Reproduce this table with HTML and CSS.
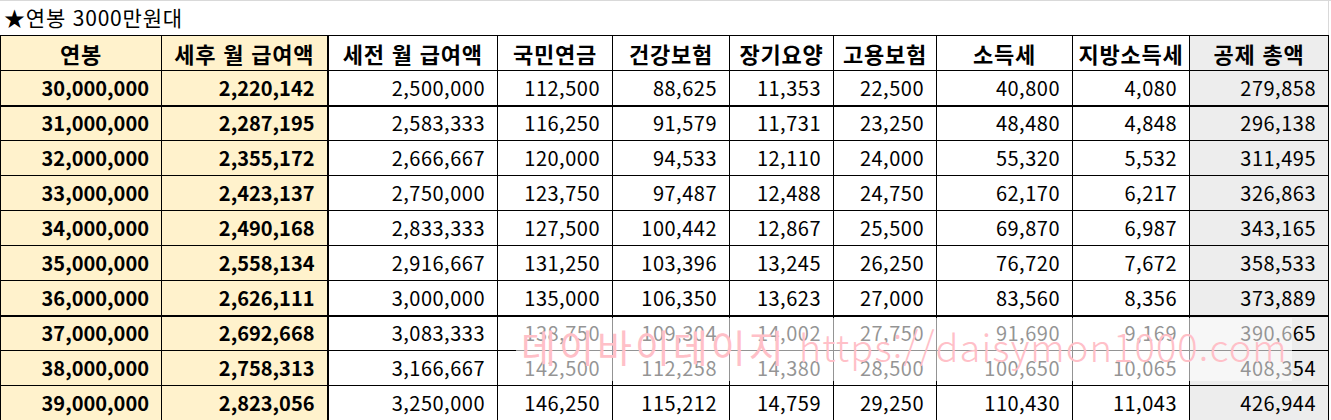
FILE: index.html
```html
<!DOCTYPE html>
<html lang="ko">
<head>
<meta charset="utf-8">
<link rel="stylesheet" href="styles.css">
</head>
<body>
<div class="sheet">
  <div class="title">★연봉 3000만원대</div>
  <div class="table-wrap">
    <table class="grid">
      <colgroup>
        <col class="c1"><col class="c2"><col class="c3"><col class="c4"><col class="c5">
        <col class="c6"><col class="c7"><col class="c8"><col class="c9"><col class="c10">
      </colgroup>
      <thead>
        <tr>
          <th class="gold">연봉</th>
          <th class="gold sep">세후 월 급여액</th>
          <th>세전 월 급여액</th>
          <th>국민연금</th>
          <th>건강보험</th>
          <th>장기요양</th>
          <th>고용보험</th>
          <th>소득세</th>
          <th>지방소득세</th>
          <th class="gray">공제 총액</th>
        </tr>
      </thead>
      <tbody>
        <tr class="thick"><td class="gold b">30,000,000</td><td class="gold b sep">2,220,142</td><td>2,500,000</td><td>112,500</td><td>88,625</td><td>11,353</td><td>22,500</td><td>40,800</td><td>4,080</td><td class="gray">279,858</td></tr>
        <tr><td class="gold b">31,000,000</td><td class="gold b sep">2,287,195</td><td>2,583,333</td><td>116,250</td><td>91,579</td><td>11,731</td><td>23,250</td><td>48,480</td><td>4,848</td><td class="gray">296,138</td></tr>
        <tr><td class="gold b">32,000,000</td><td class="gold b sep">2,355,172</td><td>2,666,667</td><td>120,000</td><td>94,533</td><td>12,110</td><td>24,000</td><td>55,320</td><td>5,532</td><td class="gray">311,495</td></tr>
        <tr><td class="gold b">33,000,000</td><td class="gold b sep">2,423,137</td><td>2,750,000</td><td>123,750</td><td>97,487</td><td>12,488</td><td>24,750</td><td>62,170</td><td>6,217</td><td class="gray">326,863</td></tr>
        <tr><td class="gold b">34,000,000</td><td class="gold b sep">2,490,168</td><td>2,833,333</td><td>127,500</td><td>100,442</td><td>12,867</td><td>25,500</td><td>69,870</td><td>6,987</td><td class="gray">343,165</td></tr>
        <tr><td class="gold b">35,000,000</td><td class="gold b sep">2,558,134</td><td>2,916,667</td><td>131,250</td><td>103,396</td><td>13,245</td><td>26,250</td><td>76,720</td><td>7,672</td><td class="gray">358,533</td></tr>
        <tr class="thick"><td class="gold b">36,000,000</td><td class="gold b sep">2,626,111</td><td>3,000,000</td><td>135,000</td><td>106,350</td><td>13,623</td><td>27,000</td><td>83,560</td><td>8,356</td><td class="gray">373,889</td></tr>
        <tr><td class="gold b">37,000,000</td><td class="gold b sep">2,692,668</td><td>3,083,333</td><td>138,750</td><td>109,304</td><td>14,002</td><td>27,750</td><td>91,690</td><td>9,169</td><td class="gray">390,665</td></tr>
        <tr><td class="gold b">38,000,000</td><td class="gold b sep">2,758,313</td><td>3,166,667</td><td>142,500</td><td>112,258</td><td>14,380</td><td>28,500</td><td>100,650</td><td>10,065</td><td class="gray">408,354</td></tr>
        <tr><td class="gold b">39,000,000</td><td class="gold b sep">2,823,056</td><td>3,250,000</td><td>146,250</td><td>115,212</td><td>14,759</td><td>29,250</td><td>110,430</td><td>11,043</td><td class="gray">426,944</td></tr>
      </tbody>
    </table>
    <div class="watermark"><span class="wm-ko">데이바이데이지</span><span class="wm-en">https://daisymon1000.com</span></div>
  </div>
</div>
</body>
</html>
```

FILE: styles.css
```css
html, body {
  margin: 0;
  padding: 0;
  background: #fff;
}
body {
  font-family: "Noto Sans CJK KR", "Noto Sans", sans-serif;
  color: #000;
}
.sheet {
  width: 1331px;
  height: 420px;
  overflow: hidden;
  border-top: 1px solid #d9d9d9;
  box-sizing: border-box;
}
.title {
  height: 34px;
  line-height: 32px;
  font-size: 21px;
  letter-spacing: 0.8px;
  padding-left: 4px;
  border-right: 1px solid #d9d9d9;
  width: 1324px;
}
.table-wrap {
  position: relative;
}
.grid {
  border-collapse: collapse;
  table-layout: fixed;
  width: 1329px;
}
.c1 { width: 161px; }
.c2 { width: 166px; }
.c3 { width: 170px; }
.c4 { width: 115px; }
.c5 { width: 117px; }
.c6 { width: 104px; }
.c7 { width: 103px; }
.c8 { width: 136px; }
.c9 { width: 117px; }
.c10 { width: 139px; }
.grid th,
.grid td {
  border: 1px solid #000;
  height: 35px;
  padding: 0 12px 0 0;
  box-sizing: border-box;
  font-size: 20px;
  line-height: 1;
  white-space: nowrap;
  overflow: hidden;
}
.grid th {
  text-align: center;
  padding: 0;
  font-size: 22px;
  letter-spacing: 0.8px;
  font-weight: 700;
}
.grid td {
  text-align: right;
  font-weight: 400;
  letter-spacing: 0.5px;
}
.grid td.b {
  font-weight: 700;
  letter-spacing: 0;
}
.gold { background: #fff2cc; }
.gray { background: #ededed; }
.grid .sep { border-right: 2px solid #000; }
.grid tr.thick td { border-bottom: 2px solid #000; }
.watermark {
  position: absolute;
  left: 516px;
  top: 283px;
  width: 776px;
  height: 63px;
  background: rgba(255, 255, 255, 0.58);
  overflow: hidden;
  white-space: nowrap;
  color: rgb(255, 192, 200);
  font-weight: 400;
  padding-left: 5px;
  box-sizing: border-box;
  line-height: 56px;
}
.wm-ko {
  font-size: 38px;
  letter-spacing: 3px;
}
.wm-en {
  margin-left: 12px;
  font-size: 38px;
  font-weight: 300;
  letter-spacing: 1.1px;
}
```
